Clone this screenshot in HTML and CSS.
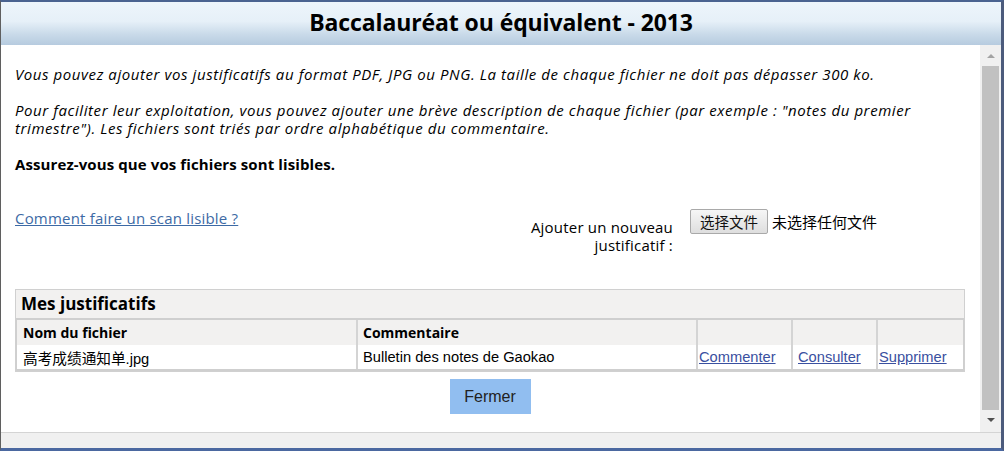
FILE: index.html
```html
<!DOCTYPE html>
<html lang="fr">
<head>
<meta charset="utf-8">
<title>Baccalauréat ou équivalent - 2013</title>
<link rel="stylesheet" href="styles.css">
</head>
<body>
<div class="window">
  <header class="titlebar"><h1 class="title">Baccalauréat ou équivalent - 2013</h1></header>
  <div class="main">
    <div class="viewport">
      <p class="info">Vous pouvez ajouter vos justificatifs au format PDF, JPG ou PNG. La taille de chaque fichier ne doit pas dépasser 300 ko.</p>
      <p class="info">Pour faciliter leur exploitation, vous pouvez ajouter une brève description de chaque fichier (par exemple : "notes du premier<br>trimestre"). Les fichiers sont triés par ordre alphabétique du commentaire.</p>
      <p class="warn">Assurez-vous que vos fichiers sont lisibles.</p>
      <div class="upload-row">
        <a class="help-link" href="#">Comment faire un scan lisible ?</a>
        <div class="upload">
          <label class="upload-label">Ajouter un nouveau<br>justificatif :</label>
          <div class="file-input">
            <span class="file-btn">选择文件</span>
            <span class="file-none">未选择任何文件</span>
          </div>
        </div>
      </div>
      <section class="panel">
        <h2 class="panel-title">Mes justificatifs</h2>
        <table class="files">
          <thead>
            <tr>
              <th class="c-name">Nom du fichier</th>
              <th class="c-comment">Commentaire</th>
              <th class="c-a1"></th>
              <th class="c-a2"></th>
              <th class="c-a3"></th>
            </tr>
          </thead>
          <tbody>
            <tr>
              <td class="c-name">高考成绩通知单.jpg</td>
              <td class="c-comment">Bulletin des notes de Gaokao</td>
              <td class="c-a1"><a href="#">Commenter</a></td>
              <td class="c-a2"><a href="#">Consulter</a></td>
              <td class="c-a3"><a href="#">Supprimer</a></td>
            </tr>
          </tbody>
        </table>
      </section>
      <div class="actions"><button class="close-btn" type="button">Fermer</button></div>
    </div>
    <div class="scrollbar">
      <span class="arrow-up"></span>
      <span class="thumb"></span>
      <span class="arrow-down"></span>
    </div>
  </div>
  <div class="statusbar"></div>
</div>
</body>
</html>
```

FILE: styles.css
```css
html, body {
  margin: 0;
  padding: 0;
  background: #ffffff;
}

.window {
  width: 1004px;
  height: 451px;
  box-sizing: border-box;
  display: flex;
  flex-direction: column;
  border-top: 2px solid #4a6390;
  border-left: 1px solid #5f5f5f;
  border-right: 3px solid #4c5b7c;
  border-bottom: 3px solid #4b68a0;
  font-family: "Open Sans", "Noto Sans", sans-serif;
  color: #000;
  overflow: hidden;
}

.titlebar {
  height: 43px;
  box-sizing: border-box;
  padding-bottom: 3px;
  flex: none;
  display: flex;
  align-items: center;
  justify-content: center;
  background: linear-gradient(to bottom, #edf5fb 0%, #e6f0f8 45%, #c9dae9 75%, #b6cbdf 100%);
}

.title {
  margin: 0;
  font-size: 23px;
  font-weight: 700;
  line-height: 28px;
  letter-spacing: -0.1px;
}

.main {
  flex: 1;
  display: flex;
  min-height: 0;
}

.viewport {
  flex: 1;
  overflow: hidden;
  padding: 20px 15px 0 14px;
}

.info {
  margin: 0 0 18px;
  font-size: 15px;
  font-style: italic;
  line-height: 18px;
  letter-spacing: 0.58px;
}

.warn {
  margin: 0;
  font-size: 15px;
  font-weight: 700;
  line-height: 18px;
  letter-spacing: 0.1px;
}

.upload-row {
  display: flex;
  margin-top: 36px;
  height: 80px;
}

.help-link {
  width: 505px;
  height: 18px;
  font-size: 15px;
  line-height: 18px;
  letter-spacing: 0.2px;
  color: #3d6aa5;
  text-decoration: underline;
}

.upload {
  display: flex;
  align-items: flex-start;
}

.upload-label {
  margin-top: 9px;
  width: 153px;
  text-align: right;
  font-size: 15px;
  line-height: 18px;
  letter-spacing: 0.2px;
}

.file-input {
  display: flex;
  align-items: center;
  margin-left: 17px;
  font-family: "Noto Sans CJK SC", sans-serif;
  font-size: 15px;
}

.file-btn {
  box-sizing: border-box;
  height: 25px;
  width: 78px;
  display: flex;
  align-items: center;
  justify-content: center;
  border: 1px solid #a9a9a9;
  border-radius: 2px;
  background: linear-gradient(to bottom, #f6f6f6, #dedede);
  color: #111;
  font-size: 14.5px;
}

.file-none {
  margin-left: 4px;
}

.panel {
  border: 1px solid #d0d0d0;
  background: #f2f1f0;
  width: 948px;
}

.panel-title {
  margin: 0;
  height: 28px;
  padding-left: 5px;
  font-size: 17px;
  font-weight: 700;
  line-height: 28px;
}

.files {
  width: 948px;
  border-collapse: separate;
  border-spacing: 0;
  border-style: solid;
  border-color: #cfcfcf;
  border-width: 2px 1px 2px 1px;
  table-layout: fixed;
  box-sizing: border-box;
}

.files th,
.files td {
  box-sizing: border-box;
  border-left: 2px solid #d4d4d4;
  text-align: left;
  vertical-align: middle;
  white-space: nowrap;
}

.files th:first-child,
.files td:first-child {
  border-left: none;
}

.files th {
  height: 25px;
  font-size: 14px;
  font-weight: 700;
  background: #f2f1f0;
}

.files td {
  height: 24px;
  background: #ffffff;
  font-family: "Liberation Sans", "Noto Sans CJK SC", sans-serif;
  font-size: 14.67px;
}

.files .c-name { width: 339px; padding: 0 0 0 6px; }
.files .c-comment { width: 340px; padding: 0 0 0 5px; }
.files .c-a1 { width: 95px; padding: 0 0 0 1px; }
.files .c-a2 { width: 85px; padding: 0 0 0 5px; }
.files .c-a3 { width: 87px; padding: 0 0 0 1px; }

.files a {
  color: #3a50a0;
  text-decoration: underline;
}

.actions {
  display: flex;
  justify-content: center;
  margin-top: 7px;
}

.close-btn {
  width: 81px;
  height: 35px;
  border: none;
  background: #91bef0;
  color: #222;
  font-family: "Liberation Sans", sans-serif;
  font-size: 16px;
  padding: 0;
}

.scrollbar {
  width: 21px;
  flex: none;
  background: #f0f0f0;
  display: flex;
  flex-direction: column;
  align-items: center;
}

.arrow-up {
  margin-top: 9px;
  width: 0;
  height: 0;
  border-left: 4px solid transparent;
  border-right: 4px solid transparent;
  border-bottom: 4px solid #a3a3a3;
}

.thumb {
  margin-top: 8px;
  width: 17px;
  height: 344px;
  background: #c1c1c1;
}

.arrow-down {
  margin-top: 8px;
  width: 0;
  height: 0;
  border-left: 4px solid transparent;
  border-right: 4px solid transparent;
  border-top: 4px solid #505050;
}

.statusbar {
  height: 15px;
  flex: none;
  background: #f0f0f0;
  border-top: 1px solid #d4d4d4;
}
```
